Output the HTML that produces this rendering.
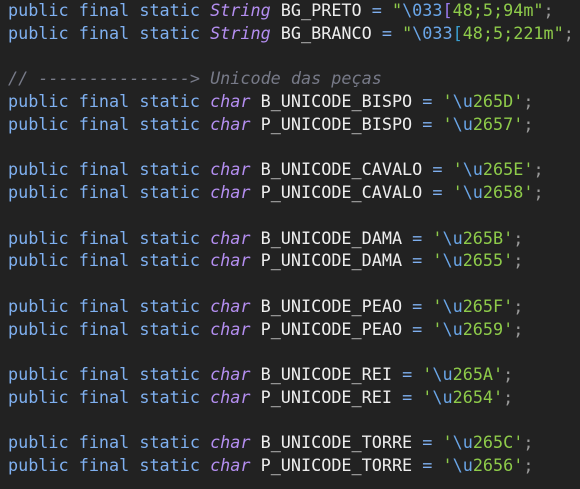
<!DOCTYPE html>
<html><head><meta charset="utf-8"><style>
html,body{margin:0;padding:0;background:#222222;width:580px;height:489px;overflow:hidden}
pre{margin:0;padding:0 0 0 8px;position:relative;top:-1px;font-family:"DejaVu Sans Mono","Liberation Mono",monospace;font-size:16.8px;line-height:22.75px;color:#eeeeee;white-space:pre}
.k{color:#7fb0f0}
.t{color:#b48ef0;font-style:italic}
.s{color:#8ecb4a}
.e{color:#6aa6e8}
.o{color:#7fb0f0}
.p{color:#999}
.c{color:#777a88;font-style:italic}
.b1{color:#9b7bf0}.b2{color:#3a9fd0}
</style></head><body><pre><span class="k">public final static</span> <span class="t">String</span> BG_PRETO <span class="o">=</span> <span class="s">"</span><span class="e">\033</span><span class="b1">[</span><span class="s">48;5;94m"</span><span class="p">;</span>
<span class="k">public final static</span> <span class="t">String</span> BG_BRANCO <span class="o">=</span> <span class="s">"</span><span class="e">\033</span><span class="b2">[</span><span class="s">48;5;221m"</span><span class="p">;</span>

<span class="c">// ---------------&gt; Unicode das peças</span>
<span class="k">public final static</span> <span class="t">char</span> B_UNICODE_BISPO <span class="o">=</span> <span class="s">'</span><span class="e">\u</span><span class="s">265D'</span><span class="p">;</span>
<span class="k">public final static</span> <span class="t">char</span> P_UNICODE_BISPO <span class="o">=</span> <span class="s">'</span><span class="e">\u</span><span class="s">2657'</span><span class="p">;</span>

<span class="k">public final static</span> <span class="t">char</span> B_UNICODE_CAVALO <span class="o">=</span> <span class="s">'</span><span class="e">\u</span><span class="s">265E'</span><span class="p">;</span>
<span class="k">public final static</span> <span class="t">char</span> P_UNICODE_CAVALO <span class="o">=</span> <span class="s">'</span><span class="e">\u</span><span class="s">2658'</span><span class="p">;</span>

<span class="k">public final static</span> <span class="t">char</span> B_UNICODE_DAMA <span class="o">=</span> <span class="s">'</span><span class="e">\u</span><span class="s">265B'</span><span class="p">;</span>
<span class="k">public final static</span> <span class="t">char</span> P_UNICODE_DAMA <span class="o">=</span> <span class="s">'</span><span class="e">\u</span><span class="s">2655'</span><span class="p">;</span>

<span class="k">public final static</span> <span class="t">char</span> B_UNICODE_PEAO <span class="o">=</span> <span class="s">'</span><span class="e">\u</span><span class="s">265F'</span><span class="p">;</span>
<span class="k">public final static</span> <span class="t">char</span> P_UNICODE_PEAO <span class="o">=</span> <span class="s">'</span><span class="e">\u</span><span class="s">2659'</span><span class="p">;</span>

<span class="k">public final static</span> <span class="t">char</span> B_UNICODE_REI <span class="o">=</span> <span class="s">'</span><span class="e">\u</span><span class="s">265A'</span><span class="p">;</span>
<span class="k">public final static</span> <span class="t">char</span> P_UNICODE_REI <span class="o">=</span> <span class="s">'</span><span class="e">\u</span><span class="s">2654'</span><span class="p">;</span>

<span class="k">public final static</span> <span class="t">char</span> B_UNICODE_TORRE <span class="o">=</span> <span class="s">'</span><span class="e">\u</span><span class="s">265C'</span><span class="p">;</span>
<span class="k">public final static</span> <span class="t">char</span> P_UNICODE_TORRE <span class="o">=</span> <span class="s">'</span><span class="e">\u</span><span class="s">2656'</span><span class="p">;</span>
</pre></body></html>
